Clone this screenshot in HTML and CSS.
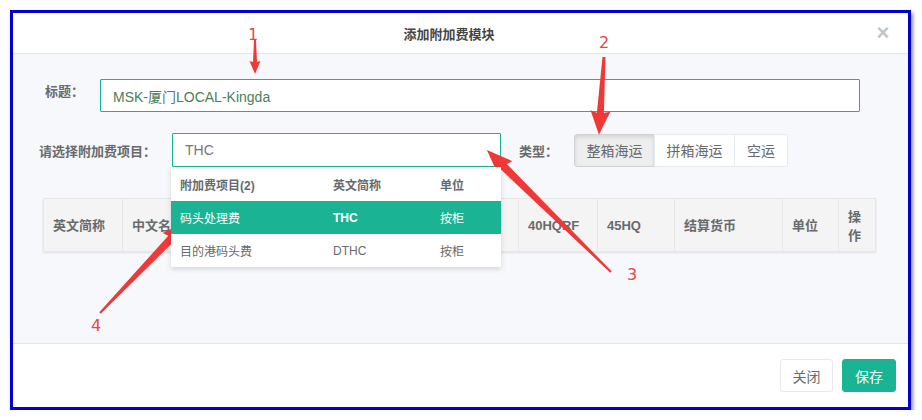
FILE: index.html
```html
<!DOCTYPE html>
<html lang="zh-CN">
<head>
    <meta charset="UTF-8">
    <meta name="viewport" content="width=device-width, initial-scale=1.0">
    <title>添加附加费模块</title>

    <link rel="stylesheet" href="styles.css">
</head>
<body>

    <div class="frame">
        <div class="modal-header">
            <h4 class="modal-title">添加附加费模块</h4>
            <span class="close">&times;</span>
        </div>

        <div class="modal-body">
            <div class="form-row row-title">
                <label class="label label-title">标题：</label>
                <input class="input input-title" type="text" value="MSK-厦门LOCAL-Kingda">
            </div>

            <div class="form-row row-fee">
                <label class="label label-fee">请选择附加费项目：</label>
                <div class="picker">
                    <input class="input input-fee" type="text" value="THC">
                    <table class="dropdown">
                        <tr class="dd-head">
                            <td>附加费项目(2)</td>
                            <td>英文简称</td>
                            <td>单位</td>
                        </tr>
                        <tr class="dd-row active">
                            <td>码头处理费</td>
                            <td class="code">THC</td>
                            <td>按柜</td>
                        </tr>
                        <tr class="dd-row">
                            <td>目的港码头费</td>
                            <td>DTHC</td>
                            <td>按柜</td>
                        </tr>
                    </table>
                </div>
                <label class="label label-type">类型：</label>
                <div class="btn-group">
                    <button class="btn btn-fcl active">整箱海运</button>
                    <button class="btn btn-lcl">拼箱海运</button>
                    <button class="btn btn-air">空运</button>
                </div>
            </div>

            <table class="fee-table">
                <colgroup>
                    <col style="width: 79px">
                    <col style="width: 79px">
                    <col style="width: 79px">
                    <col style="width: 79px">
                    <col style="width: 79px">
                    <col style="width: 80px">
                    <col style="width: 79px">
                    <col style="width: 77px">
                    <col style="width: 108px">
                    <col style="width: 56px">
                    <col style="width: 37px">
                </colgroup>
                <tr>
                    <th>英文简称</th>
                    <th>中文名</th>
                    <th></th>
                    <th></th>
                    <th></th>
                    <th></th>
                    <th>40HQRF</th>
                    <th>45HQ</th>
                    <th>结算货币</th>
                    <th>单位</th>
                    <th>操作</th>
                </tr>
            </table>
        </div>

        <div class="modal-footer">
            <button class="btn btn-white">关闭</button>
            <button class="btn btn-primary">保存</button>
        </div>
    </div>

    <!-- red callouts drawn over the screenshot -->
    <svg class="marks" width="922" height="420" viewBox="0 0 922 420">
        <g transform="translate(255 40) rotate(90)">
            <polygon points="0,-1 22,-2 21,-5.5 34,0 21,5.5 22,2 0,1"/>
        </g>
        <g transform="translate(604 57) rotate(93.7)">
            <polygon points="0,-1.5 56,-3.5 54,-10 78,0 54,10 56,3.5 0,1.5"/>
        </g>
        <g transform="translate(611 272) rotate(-135.5)">
            <polygon points="0,-1 150,-4 148,-10 174,0 148,10 150,4 0,1"/>
        </g>
        <g transform="translate(100 313) rotate(-46.3)">
            <polygon points="0,-1 103,-4 101,-10 127,0 101,10 103,4 0,1"/>
        </g>
        <text x="248" y="40">1</text>
        <text x="599" y="48">2</text>
        <text x="627" y="280">3</text>
        <text x="91" y="331">4</text>
    </svg>

</body>
</html>
```

FILE: styles.css
```css
body {
    margin: 0;
    background-color: #fff;
    font-family: "Liberation Sans", "Noto Sans CJK SC", sans-serif;
    color: #676a6c;
}

.frame {
    box-sizing: border-box;
    width: 901px;
    height: 400px;
    margin: 10px 0 0 10px;
    border: 3px solid #0000d0;
    box-shadow: 2px 3px 4px rgba(0, 0, 0, 0.45);
    display: flex;
    flex-direction: column;
    background-color: #fff;
}

/* header */
.modal-header {
    height: 40px;
    border-bottom: 1px solid #e5e5e5;
    display: flex;
    align-items: center;
    padding: 0 14px 0 13px;
}
.modal-title {
    flex: 1;
    margin: 0;
    text-align: center;
    font-size: 13px;
    font-weight: bold;
    color: #444;
}
.close {
    width: 22px;
    text-align: center;
    font-size: 22px;
    font-weight: bold;
    line-height: 20px;
    color: #c5c5c5;
}

/* body */
.modal-body {
    height: 290px;
    background-color: #f6f8fb;
    border-bottom: 1px solid #e5e5e5;
    box-sizing: border-box;
    padding-top: 25px;
}

.form-row {
    display: flex;
    align-items: center;
}
.row-title {
    padding-left: 32px;
}
.row-fee {
    padding-left: 26px;
    margin-top: 21px;
}

.label {
    font-size: 13px;
    font-weight: bold;
    color: #676a6c;
}
.label-title {
    width: 55px;
    align-self: flex-start;
    padding-top: 3px;
    line-height: 20px;
}
.label-fee {
    width: 133px;
}
.label-type {
    width: 55px;
    margin-left: 18px;
}

.input {
    box-sizing: border-box;
    border: 1px solid #1ab394;
    border-radius: 1px;
    background-color: #fff;
    font-family: "Liberation Sans", "Noto Sans CJK SC", sans-serif;
    font-size: 14px;
    padding: 0 12px;
    outline: none;
}
.input-title {
    width: 760px;
    height: 33px;
    color: #4f7d5b;
}
.input-fee {
    width: 329px;
    height: 34px;
    color: #777;
}

.picker {
    position: relative;
}

/* dropdown list under the fee input */
.dropdown {
    position: absolute;
    top: 34px;
    left: -1px;
    width: 330px;
    border-collapse: collapse;
    table-layout: fixed;
    background-color: #fff;
    box-shadow: 0 2px 5px rgba(0, 0, 0, 0.15);
    font-size: 12px;
    z-index: 2;
}
.dropdown td {
    padding: 0 9px;
    height: 33px;
}
.dropdown td:nth-child(1) {
    width: 135px;
}
.dropdown td:nth-child(2) {
    width: 89px;
}
.dd-head td {
    font-weight: bold;
    height: 34px;
}
.dd-row.active {
    background-color: #1ab394;
    color: #fff;
}
.dd-row.active .code {
    font-weight: bold;
}

.btn-group {
    display: flex;
}
.btn {
    font-family: "Liberation Sans", "Noto Sans CJK SC", sans-serif;
    font-size: 14px;
    color: #676a6c;
    background-color: #fff;
    border: 1px solid #e7eaec;
    height: 33px;
    padding: 0;
    margin: 0;
}
.btn-fcl,
.btn-lcl {
    width: 81px;
}
.btn-air {
    width: 54px;
}
.btn-group .btn + .btn {
    margin-left: -1px;
}
.btn-group .btn:first-child {
    border-radius: 3px 0 0 3px;
}
.btn-group .btn:last-child {
    border-radius: 0 3px 3px 0;
}
.btn-group .btn.active {
    background-color: #eee;
    border-color: #d2d2d2;
    box-shadow: inset 0 2px 4px rgba(0, 0, 0, 0.12);
}

/* table header */
.fee-table {
    width: 832px;
    margin: 31px 0 0 30px;
    border-collapse: collapse;
    table-layout: fixed;
    box-shadow: 0 1px 2px rgba(0, 0, 0, 0.1);
}
.fee-table th {
    background-color: #f4f4f4;
    border: 1px solid #e7e7e7;
    text-align: left;
    font-size: 13px;
    font-weight: bold;
    color: #676a6c;
    line-height: 19px;
    padding: 7px 9px 6px;
    height: 53px;
    box-sizing: border-box;
    white-space: normal;
}

/* footer */
.modal-footer {
    flex: 1;
    display: flex;
    justify-content: flex-end;
    align-items: flex-start;
    gap: 9px;
    padding: 15px 12px 0 0;
}
.btn-white {
    width: 53px;
    border-radius: 3px;
}
.btn-primary {
    width: 54px;
    background-color: #1ab394;
    border-color: #1ab394;
    color: #fff;
    border-radius: 3px;
}

/* annotation layer */
.marks {
    position: absolute;
    top: 0;
    left: 0;
    pointer-events: none;
}
.marks polygon {
    fill: #ef3838;
}
.marks text {
    fill: #e6454a;
    font-family: "DejaVu Sans", sans-serif;
    font-size: 16px;
}
```
